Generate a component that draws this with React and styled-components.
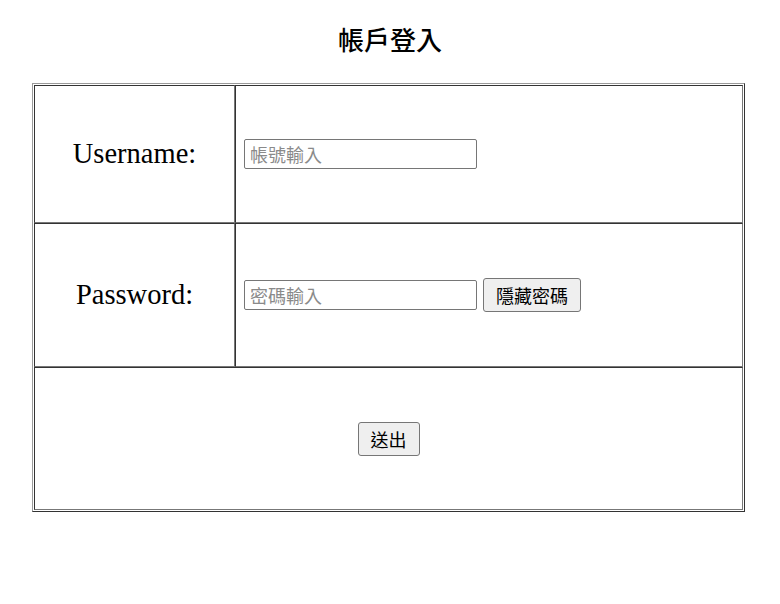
import React from "react";
import styled, { createGlobalStyle } from "styled-components";

const Global = createGlobalStyle`
  html, body { background: #fff; }
  body {
    margin: 8px;
    font-family: "Liberation Serif", "Noto Sans CJK TC", serif;
    color: #000;
  }
`;

const Title = styled.h2`
  margin: 13px 0 27px;
  text-align: center;
  font-family: "Noto Sans CJK TC", sans-serif;
  font-size: 26px;
  font-weight: 500;
  line-height: 35px;
`;

const Table = styled.table`
  width: 713px;
  margin: 0 0 0 24px;
  border-collapse: separate;
  border-spacing: 0;
  padding: 1px;
  border: 1px solid;
  border-color: #9a9a9a #333 #333 #9a9a9a;
`;

const Cell = styled.td`
  box-sizing: border-box;
  height: ${(p) => p.$h}px;
  border: 1px solid;
  border-color: #333 #777 #777 #333;
  padding: 0 8px;
  text-align: ${(p) => p.$align || "left"};
  vertical-align: middle;
`;

const LabelCell = styled(Cell)`
  width: 201px;
  text-align: center;
  font-family: "Liberation Serif", serif;
  font-size: 28.5px;
`;

const Field = styled.input`
  box-sizing: border-box;
  width: 233px;
  height: 30px;
  border: 1px solid #767676;
  border-radius: 2px;
  padding: 1px 5px;
  font-family: "Noto Sans CJK TC", sans-serif;
  font-size: 18px;
  vertical-align: middle;
  &::placeholder { color: #8a8a8a; }
`;

const Button = styled.button`
  box-sizing: border-box;
  height: 34px;
  padding: 0 12px;
  margin-left: ${(p) => p.$ml || 0}px;
  background: #efefef;
  border: 1px solid #767676;
  border-radius: 3px;
  font-family: "Noto Sans CJK TC", sans-serif;
  font-size: 18px;
  color: #000;
  vertical-align: middle;
`;

export default function App() {
  return (
    <>
      <Global />
      <Title>帳戶登入</Title>
      <Table>
        <tbody>
          <tr>
            <LabelCell $h={138}>Username:</LabelCell>
            <Cell $h={138}>
              <Field placeholder="帳號輸入" />
            </Cell>
          </tr>
          <tr>
            <LabelCell $h={144}>Password:</LabelCell>
            <Cell $h={144}>
              <Field type="password" placeholder="密碼輸入" />
              <Button $ml={6}>隱藏密碼</Button>
            </Cell>
          </tr>
          <tr>
            <Cell $h={143} colSpan={2} $align="center">
              <Button>送出</Button>
            </Cell>
          </tr>
        </tbody>
      </Table>
    </>
  );
}
